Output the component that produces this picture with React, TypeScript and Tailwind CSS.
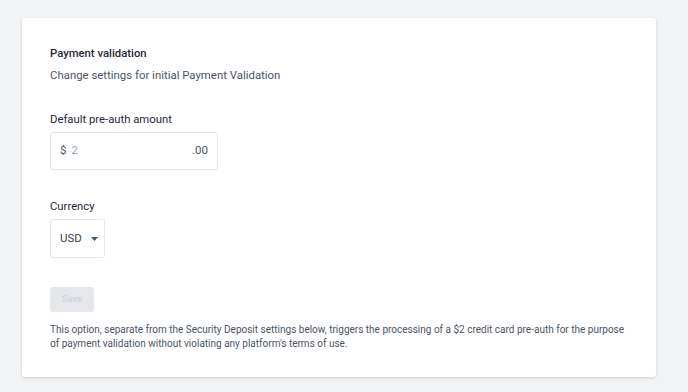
export default function App() {
    return (
        <div className="min-h-screen bg-[#f2f3f5] pl-[22px] pr-[32px] pt-[18px] font-['Roboto',sans-serif]">
            <div className="w-[634px] rounded-[3px] bg-white px-[28px] pb-[26px] pt-[28px] shadow-[0_1px_3px_rgba(0,0,0,0.15)]">
                <h2 className="text-[11.3px] font-medium leading-[16px] text-[#1f2937]">Payment validation</h2>
                <p className="mt-[5px] text-[11.4px] leading-[16px] text-[#4b5563]">Change settings for initial Payment Validation</p>

                <label className="mt-[29px] block text-[11.3px] leading-[16px] text-[#1f2937]">Default pre-auth amount</label>
                <div className="mt-[4px] flex h-[38px] w-[168px] items-center rounded-[3px] border border-[#e5e7eb] px-[9px] text-[11.5px]">
                    <span className="text-[#4b5563]">$</span>
                    <span className="ml-[5px] flex-1 text-[#9ca3af]">2</span>
                    <span className="text-[#4b5563]">.00</span>
                </div>

                <label className="mt-[29px] block text-[11.3px] leading-[16px] text-[#1f2937]">Currency</label>
                <div className="mt-[4px] flex h-[39px] w-[55px] items-center rounded-[3px] border border-[#e5e7eb] pl-[9px] text-[11.5px] text-[#374151]">
                    <span>USD</span>
                    <svg className="ml-[9px]" width="7" height="4" viewBox="0 0 7 4">
                        <path d="M0 0h7L3.5 4z" fill="#4b5563" />
                    </svg>
                </div>

                <button className="mt-[29px] block h-[25px] w-[44px] rounded-[3px] bg-[#e5e7eb] text-[9.5px] font-semibold text-[#d1d5db]">
                    Save
                </button>

                <p className="mt-[11px] text-[10px] leading-[14px] text-[#4b5563]">
                    This option, separate from the Security Deposit settings below, triggers the processing of a $2 credit card pre-auth for the purpose of payment validation without violating any platform's terms of use.
                </p>
            </div>
        </div>
    );
}
